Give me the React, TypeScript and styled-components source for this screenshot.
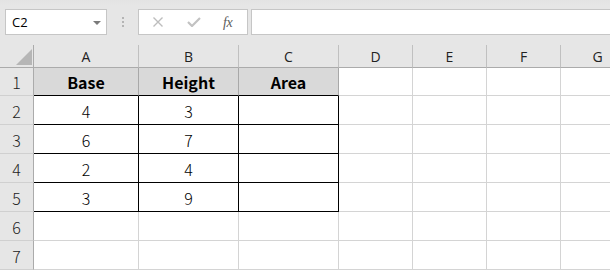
import React from "react";
import styled, { createGlobalStyle, css } from "styled-components";

const Global = createGlobalStyle`
  html, body { margin: 0; padding: 0; background: #ffffff; overflow: hidden; }
  body { width: 610px; height: 270px; font-family: "Open Sans", "Liberation Sans", sans-serif; }
  * { box-sizing: border-box; }
`;

const Window = styled.div`
  width: 610px;
  height: 270px;
  display: flex;
  flex-direction: column;
  background: #ffffff;
  overflow: hidden;
`;

const Toolbar = styled.div`
  height: 45px;
  flex: none;
  display: flex;
  align-items: flex-start;
  padding: 9px 0 0 5px;
  background: linear-gradient(#e3e3e3 0, #e6e6e6 6px, #e6e6e6 100%);
`;

const NameBox = styled.div`
  width: 102px;
  height: 26px;
  border: 1px solid #c6c6c6;
  background: #ffffff;
  display: flex;
  align-items: center;
  justify-content: space-between;
  padding: 0 5px 0 6px;
  font-family: "Open Sans", "Liberation Sans", sans-serif;
  font-size: 13px;
  color: #000;
`;

const Caret = styled.span`
  width: 0;
  height: 0;
  border-left: 4px solid transparent;
  border-right: 4px solid transparent;
  border-top: 4px solid #7a7a7a;
  margin-top: 1px;
`;

const Grip = styled.div`
  width: 31px;
  height: 26px;
  display: flex;
  flex-direction: column;
  align-items: center;
  justify-content: center;
  gap: 2px;
`;

const GripDot = styled.span`
  width: 2px;
  height: 2px;
  background: #b4b4b4;
`;

const FormulaButtons = styled.div`
  width: 110px;
  height: 26px;
  border: 1px solid #c6c6c6;
  background: #ffffff;
  display: flex;
  align-items: center;
  padding-left: 13px;
`;

const IconSlot = styled.span<{ $w: number }>`
  width: ${(p) => p.$w}px;
  display: flex;
  align-items: center;
  justify-content: flex-start;
`;

const Fx = styled.span`
  font-family: "Liberation Serif", "DejaVu Serif", serif;
  font-style: italic;
  font-size: 14px;
  color: #5c5c5c;
  letter-spacing: -0.5px;
  line-height: 1;
  margin-top: 2px;
`;

const FormulaInput = styled.div`
  flex: 1;
  height: 26px;
  margin-left: 3px;
  border: 1px solid #c6c6c6;
  border-right: none;
  background: #ffffff;
`;

const Sheet = styled.div`
  display: grid;
  grid-template-columns: 34px 105px 100px 100px 74px 74px 74px 74px 1fr;
  grid-template-rows: 23px 28px repeat(6, 29px);
`;

const Corner = styled.div`
  background: #e6e6e6;
  border-right: 1px solid #ababab;
  border-bottom: 1px solid #ababab;
  position: relative;
`;

const CornerTriangle = styled.span`
  position: absolute;
  right: 1px;
  bottom: 2px;
  width: 0;
  height: 0;
  border-left: 16px solid transparent;
  border-bottom: 16px solid #b6b6b6;
`;

const ColHead = styled.div`
  background: #e6e6e6;
  border-bottom: 1px solid #ababab;
  border-right: 1px solid #c0c0c0;
  display: flex;
  align-items: center;
  justify-content: center;
  font-family: "Open Sans", "Liberation Sans", sans-serif;
  font-size: 14px;
  color: #222;
  padding-top: 1px;
`;

const RowHead = styled.div`
  background: #e6e6e6;
  border-right: 1px solid #ababab;
  border-bottom: 1px solid #d0d0d0;
  display: flex;
  align-items: center;
  justify-content: center;
  font-family: "Noto Sans CJK JP", "Noto Sans", sans-serif;
  font-size: 16px;
  font-weight: 300;
  color: #222;
  padding-top: 1px;
`;

type Kind = "plain" | "head" | "body";

const Cell = styled.div<{ $kind: Kind }>`
  display: flex;
  align-items: center;
  justify-content: center;
  font-family: "Noto Sans CJK JP", "Noto Sans", sans-serif;
  font-size: 16px;
  font-weight: 300;
  color: #000;
  background: #ffffff;
  border-right: 1px solid #d4d4d4;
  border-bottom: 1px solid #d4d4d4;
  padding-top: 1px;
  ${(p) =>
    p.$kind === "head" &&
    css`
      background: #d9d9d9;
      font-weight: 700;
      border-right-color: #a8a8a8;
      border-bottom-color: #000;
    `}
  ${(p) =>
    p.$kind === "body" &&
    css`
      border-right-color: #000;
      border-bottom-color: #000;
    `}
`;

const cols = ["A", "B", "C", "D", "E", "F", "G", ""];
const data: (string | null)[][] = [
  ["Base", "Height", "Area"],
  ["4", "3", ""],
  ["6", "7", ""],
  ["2", "4", ""],
  ["3", "9", ""],
  [null, null, null],
  [null, null, null],
];

export default function App() {
  return (
    <Window>
      <Global />
      <Toolbar>
        <NameBox>
          <span>C2</span>
          <Caret />
        </NameBox>
        <Grip>
          <GripDot />
          <GripDot />
          <GripDot />
        </Grip>
        <FormulaButtons>
          <IconSlot $w={35}>
            <svg width="12" height="10" viewBox="0 0 12 10">
              <path d="M1.5 0.5 L10.5 9.5 M10.5 0.5 L1.5 9.5" stroke="#bdbdbd" strokeWidth="1.4" fill="none" />
            </svg>
          </IconSlot>
          <IconSlot $w={36}>
            <svg width="14" height="10" viewBox="0 0 14 10">
              <path d="M1 5 L5 9 L13 1" stroke="#c2c2c2" strokeWidth="2.2" fill="none" />
            </svg>
          </IconSlot>
          <IconSlot $w={20}>
            <Fx>fx</Fx>
          </IconSlot>
        </FormulaButtons>
        <FormulaInput />
      </Toolbar>
      <Sheet>
        <Corner>
          <CornerTriangle />
        </Corner>
        {cols.map((c, i) => (
          <ColHead key={"h" + i}>{c}</ColHead>
        ))}
        {data.map((row, r) => (
          <React.Fragment key={"r" + r}>
            <RowHead>{r + 1}</RowHead>
            {cols.map((_, ci) => {
              const inTable = ci < 3 && row[ci] !== null;
              const kind: Kind = inTable ? (r === 0 ? "head" : "body") : "plain";
              return (
                <Cell key={ci} $kind={kind}>
                  {inTable ? row[ci] : ""}
                </Cell>
              );
            })}
          </React.Fragment>
        ))}
      </Sheet>
    </Window>
  );
}
